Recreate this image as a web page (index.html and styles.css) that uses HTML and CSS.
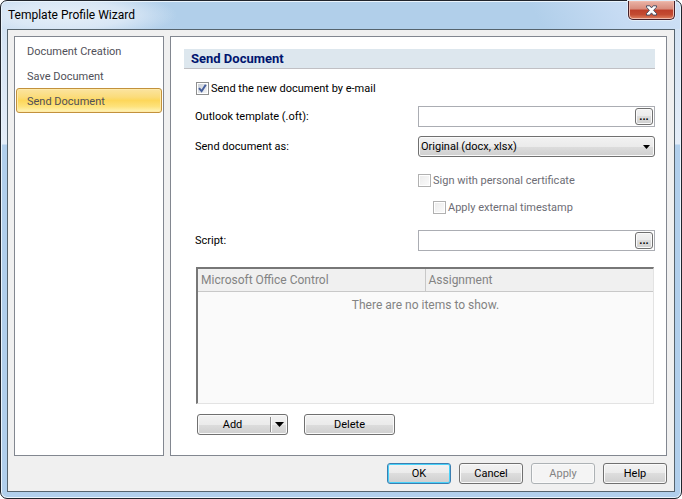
FILE: index.html
```html
<!DOCTYPE html>
<html lang="en">
<head>
<meta charset="utf-8">
<title>Template Profile Wizard</title>
<link rel="stylesheet" href="styles.css">
</head>
<body>
<div class="window">
  <header class="titlebar">
    <h1 class="title">Template Profile Wizard</h1>
    <button class="close" type="button" aria-label="Close">
      <svg width="13" height="11" viewBox="0 0 13 11" aria-hidden="true"><path d="M1.500.8h3.300L6.500 2.900 8.200.8h3.300v1.400L8.600 5.300l2.900 3.200v1.600H8.200L6.500 7.900l-1.700 2.200H1.500V8.500l2.900-3.200-2.900-3.100z" fill="#fff" stroke="#4a4f63"/></svg>
    </button>
  </header>
  <form class="client">
    <div class="columns">
      <nav class="nav">
        <a class="nav-item" href="#creation">Document Creation</a>
        <a class="nav-item" href="#save">Save Document</a>
        <a class="nav-item nav-item-active" href="#send" aria-current="page">Send Document</a>
      </nav>
      <main class="panel">
        <h2 class="heading">Send Document</h2>
        <div class="fields">
          <div class="check check-main">
            <span class="tick">
              <input class="box" type="checkbox" id="email" checked>
              <svg class="mark" width="9" height="9" viewBox="0 0 9 9" aria-hidden="true"><path d="M1 4.200 3.600 7.200 7.800.8" fill="none" stroke="#465f9c" stroke-width="2"/></svg>
            </span>
            <label for="email">Send the new document by e-mail</label>
          </div>
          <div class="row">
            <label for="template">Outlook template (.oft):</label>
            <div class="picker">
              <input class="text" type="text" id="template">
              <button class="button browse" type="button" aria-label="Browse for template"><span>...</span></button>
            </div>
          </div>
          <div class="row">
            <label for="format">Send document as:</label>
            <div class="select-wrap">
              <select class="select" id="format"><option>Original (docx, xlsx)</option></select>
              <svg class="arrow" width="7" height="4" viewBox="0 0 7 4" aria-hidden="true"><path d="M0 0h7L3.500 4z"/></svg>
            </div>
          </div>
          <div class="options">
            <div class="check disabled">
              <input class="box" type="checkbox" id="sign" disabled>
              <label for="sign">Sign with personal certificate</label>
            </div>
            <div class="check disabled indent">
              <input class="box" type="checkbox" id="stamp" disabled>
              <label for="stamp">Apply external timestamp</label>
            </div>
          </div>
          <div class="row">
            <label for="script">Script:</label>
            <div class="picker">
              <input class="text" type="text" id="script">
              <button class="button browse" type="button" aria-label="Browse for script"><span>...</span></button>
            </div>
          </div>
          <div class="list">
            <table class="table">
              <thead><tr><th>Microsoft Office Control</th><th>Assignment</th></tr></thead>
              <tbody><tr><td colspan="2">There are no items to show.</td></tr></tbody>
            </table>
          </div>
          <div class="actions">
            <div class="split button">
              <button class="split-main" type="button">Add</button>
              <button class="split-menu" type="button" aria-label="More add options">
                <svg width="9" height="5" viewBox="0 0 9 5" aria-hidden="true"><path d="M0 0h9L4.500 5z"/></svg>
              </button>
            </div>
            <button class="button wide" type="button">Delete</button>
          </div>
        </div>
      </main>
    </div>
    <footer class="footer">
      <button class="button default" type="button">OK</button>
      <button class="button" type="button">Cancel</button>
      <button class="button" type="button" disabled>Apply</button>
      <button class="button" type="button">Help</button>
    </footer>
  </form>
</div>
</body>
</html>
```
FILE: styles.css
```css
* { box-sizing: border-box; }

body {
  margin: 0;
  background: #fff;
  color: #000;
  font: 11px/16px Roboto, sans-serif;
}

button, input, select { font: inherit; color: inherit; margin: 0; }

/* Window frame */
.window {
  display: flex;
  flex-direction: column;
  min-height: 100vh;
  padding: 0 6px 6px;
  border: 1px solid #20242c;
  border-radius: 7px;
  background: radial-gradient(ellipse 110px 24px at 66px 14px, #e6eff8 0, #e0ebf7cc 55%, #e0ebf700 100%) 0 0 / 100% 28px no-repeat,
    linear-gradient(60deg, #c6dbf1 0, #b1cfea 160px, #b1cfea 78%, #c6dbf3 90%, #cde0f5) 0 0 / 100% 28px no-repeat,
    linear-gradient(#cfe0f2 0, #e4edf8 143px, #b1cfec 144px);
  box-shadow: inset 0 0 0 1px #eaf4fc;
}

.titlebar {
  display: flex;
  justify-content: space-between;
  align-items: flex-start;
  height: 28px;
}

.title {
  margin: 5px 0 0 1px;
  font: 12px/18px Roboto, sans-serif;
}

.close {
  display: grid;
  place-items: center;
  width: 47px;
  height: 19px;
  padding: 0;
  border: 1px solid #43202a;
  border-top: 0;
  border-radius: 0 0 5px 5px;
  background: linear-gradient(#eab4a7 0, #d88b7b 45%, #bd3f2a 50%, #c34b32 75%, #df8261);
  box-shadow: inset 0 0 0 1px #efb9ab, 0 0 0 1px #e2edf8;
}

.client {
  flex: 1;
  display: flex;
  flex-direction: column;
  padding: 6px 7px 7px 6px;
  border: 1px solid #56646e;
  background: #f0f0f0;
}

.columns {
  flex: 1;
  display: grid;
  grid-template-columns: 150px 1fr;
  gap: 6px;
}

.nav, .panel {
  border: 1px solid #828790;
  background: #fff;
}

/* Navigation */
.nav { padding: 1px; }

.nav-item {
  display: block;
  padding: 5px 10px 3px;
  border: 1px solid transparent;
  border-radius: 3px;
  color: #505058;
  line-height: 15px;
  text-decoration: none;
}

.nav-item-active {
  border-color: #c2913c;
  background: linear-gradient(#fbe4a0 0, #fbdc7b 35%, #fdd75b 50%, #fee27a 75%, #fff5bb);
  box-shadow: inset 0 0 0 1px #ffeaa8;
}

/* Form panel */
.panel { padding: 12px 11px 12px 12px; }

.heading {
  margin: 0 0 0 1px;
  padding: 0 7px;
  border-bottom: 1px solid #c0c0c4;
  background: #dde7ee;
  color: #00156e;
  font: bold 13px/19px Roboto, sans-serif;
}

.fields { padding: 0 0 0 12px; }

.check {
  display: flex;
  align-items: center;
  gap: 2px;
}

.check label { padding-top: 2px; line-height: 14px; }

.check-main { margin: 11px 0 10px 1px; }
.disabled { color: #6d6d75; }
.indent { margin-left: 15px; }

.box {
  display: block;
  appearance: none;
  width: 13px;
  height: 13px;
  border: 1px solid #8e8f8f;
  background: linear-gradient(135deg, #cbd0d8, #f4f5f6) content-box #fff;
  padding: 1px;
}

.box:disabled {
  border-color: #b1b1b1;
  background: linear-gradient(135deg, #ececec, #fafafa) content-box #fff;
}

.tick { display: grid; place-items: center; }
.tick > * { grid-area: 1 / 1; }
.mark { pointer-events: none; }

.row {
  display: grid;
  grid-template-columns: 223px 1fr;
  align-items: center;
  height: 21px;
  margin-bottom: 9px;
}

.picker {
  display: flex;
  height: 21px;
  padding: 1px;
  border: 1px solid #abadb3;
}

.text {
  flex: 1;
  min-width: 0;
  padding: 0 2px;
  border: 0;
  background: none;
  outline: 0;
}

.select-wrap { display: grid; align-items: center; }
.select-wrap > * { grid-area: 1 / 1; }

.select {
  appearance: none;
  width: 100%;
  height: 21px;
  padding: 1px 18px 0 2px;
  border: 1px solid #707070;
  border-radius: 3px;
  background: linear-gradient(#f2f2f2 0, #ebebeb 50%, #dddddd 50%, #cfcfcf);
  box-shadow: inset 0 0 0 1px #fafafa;
}

.arrow {
  justify-self: end;
  margin-right: 5px;
  pointer-events: none;
}

.options {
  display: grid;
  gap: 11px;
  margin: 15px 0 15px 223px;
}

/* Buttons */
.button {
  width: 64px;
  height: 21px;
  padding: 1px 0 0;
  border: 1px solid #707070;
  border-radius: 3px;
  background: linear-gradient(#f2f2f2 0, #ebebeb 50%, #dddddd 50%, #cfcfcf);
  box-shadow: inset 0 0 0 1px #fafafa;
  text-align: center;
}

.button:disabled {
  border-color: #adb2b5;
  background: #f4f4f4;
  color: #838383;
}

.default {
  border-color: #3c7fb1;
  box-shadow: inset 0 0 0 1px #48d1f9;
}

.browse {
  width: 18px;
  height: 17px;
  font-weight: bold;
  line-height: 12px;
}

.wide { width: 91px; }

.split { display: flex; width: 91px; padding: 0; }

.split-main, .split-menu {
  padding: 0;
  border: 0;
  background: none;
}

.split-main { flex: 1; padding: 1px 3px 0 0; }

.split-menu {
  display: grid;
  place-items: center;
  width: 17px;
  margin: 2px 0;
  border-left: 1px solid #8e8e8e;
  box-shadow: inset 1px 0 #fafafa;
}

/* List */
.list {
  height: 137px;
  margin: 16px 1px 10px 1px;
  border: 2px solid #696969;
  border-width: 2px 1px 1px 2px;
  border-color: #777 #e3e3e3 #e3e3e3 #777;
  background: #fafafa;
}

.table {
  width: 100%;
  border-collapse: separate;
  border-spacing: 0;
  table-layout: fixed;
  color: #838383;
  font: 12px/22px Roboto, sans-serif;
}

.table th {
  padding: 0 3px;
  border-right: 1px solid #c8c8c8;
  border-bottom: 1px solid #c8c8c8;
  background: #f0f0f0;
  font-weight: normal;
  text-align: left;
}

.table th:last-child { border-right: 0; }

.table td {
  padding: 2px 0;
  text-align: center;
}

.actions {
  display: flex;
  gap: 16px;
  margin-left: 2px;
}

.footer {
  display: flex;
  justify-content: flex-end;
  gap: 8px;
  padding-top: 7px;
}
```
